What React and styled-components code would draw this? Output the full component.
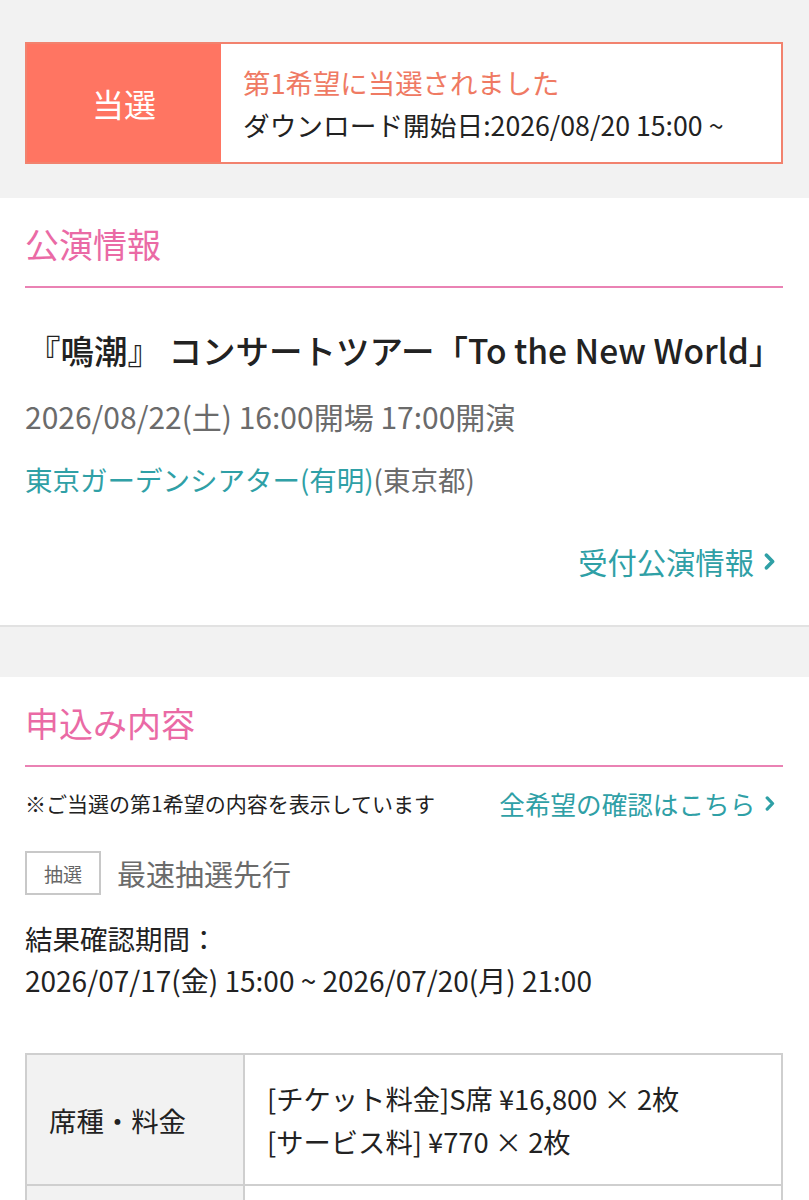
import React from 'react';
import styled, { createGlobalStyle } from 'styled-components';

const Global = createGlobalStyle`
  body {
    margin: 0;
    background: #f2f2f2;
    font-family: "Noto Sans CJK JP", "Noto Sans", sans-serif;
    color: #222;
  }
`;

const Page = styled.div`
  width: 809px;
  padding-top: 42px;
`;

const Result = styled.div`
  margin: 0 26px 34px 25px;
  display: flex;
  height: 122px;
  border: 2px solid #f2826e;
  background: #fff;
  box-sizing: border-box;
`;

const ResultBadge = styled.div`
  width: 194px;
  background: #ff7562;
  color: #fff;
  font-size: 32px;
  display: flex;
  align-items: center;
  justify-content: center;
`;

const ResultBody = styled.div`
  padding: 18px 0 0 22px;
  display: flex;
  flex-direction: column;
  gap: 3px;
  font-size: 26.7px;
  line-height: 40px;
  white-space: nowrap;
`;

const Coral = styled.div`
  color: #ef7a63;
  font-size: 27.4px;
`;

const Card = styled.section`
  background: #fff;
  padding: 24px 26px 0 25px;
  border-bottom: 2px solid #e2e2e2;
  margin-bottom: 50px;
`;

const Heading = styled.h2`
  margin: 0;
  color: #ea6aa5;
  font-size: 34px;
  font-weight: 400;
  line-height: 44px;
  padding-bottom: 20px;
  border-bottom: 2px solid #ea82b4;
`;

const Title = styled.h1`
  margin: 40px 0 0 2px;
  font-size: 33.5px;
  font-weight: 500;
  line-height: 44px;
  color: #222;
  white-space: nowrap;
`;

const Sub = styled.p`
  margin: 24px 0 0;
  font-size: 30px;
  line-height: 40px;
  color: #6b6b6b;
`;

const Venue = styled.p`
  margin: 23px 0 0;
  font-size: 27.5px;
  line-height: 40px;
  color: #6b6b6b;
`;

const Teal = styled.span`
  color: #2fa0a6;
`;

const LinkRow = styled.div`
  display: flex;
  justify-content: ${p => (p.$between ? 'space-between' : 'flex-end')};
  align-items: center;
  height: ${p => p.$h || 42}px;
  padding: ${p => p.$pad || '0'};
`;

const Link = styled.a`
  display: flex;
  align-items: center;
  gap: 10px;
  color: #2fa0a6;
  font-size: ${p => p.$size || 29.3}px;
  text-decoration: none;
`;

const Note = styled.span`
  font-size: 21px;
  color: #222;
`;

const TypeRow = styled.div`
  display: flex;
  align-items: center;
  gap: 16px;
  margin-top: 30px;
`;

const Tag = styled.span`
  border: 2px solid #c8c8c8;
  width: 76px;
  height: 44px;
  box-sizing: border-box;
  display: flex;
  align-items: center;
  justify-content: center;
  font-size: 19px;
  color: #666;
`;

const TypeName = styled.span`
  font-size: 29px;
  color: #6b6b6b;
`;

const Period = styled.div`
  margin-top: 22px;
  font-size: 27.5px;
  line-height: 42px;
  color: #222;
  white-space: nowrap;
`;

const PeriodDates = styled.div`
  font-size: 28px;
`;

const Table = styled.div`
  margin-top: 52px;
  border: 2px solid #cfcfcf;
  border-bottom: none;
`;

const Row = styled.div`
  display: grid;
  grid-template-columns: 218px 1fr;
  border-bottom: 2px solid #cfcfcf;
  min-height: ${p => p.$h || 129}px;
`;

const Th = styled.div`
  background: #f2f2f2;
  border-right: 2px solid #cfcfcf;
  display: flex;
  align-items: center;
  padding-left: 22px;
  font-size: 27.4px;
  color: #222;
`;

const Td = styled.div`
  display: flex;
  flex-direction: column;
  justify-content: center;
  padding-left: 22px;
  font-size: 27.3px;
  line-height: 43px;
  color: #222;
  white-space: nowrap;
`;

const Chevron = ({ size = 14 }) => (
  <svg width={size * 0.65} height={size} viewBox="0 0 9 14">
    <path d="M2 1.8 L7 7 L2 12.2" fill="none" stroke="#2fa0a6" strokeWidth="3" strokeLinecap="round" strokeLinejoin="round" />
  </svg>
);

export default function App() {
  return (
    <Page>
      <Global />
      <Result>
        <ResultBadge>当選</ResultBadge>
        <ResultBody>
          <Coral>第1希望に当選されました</Coral>
          <div>ダウンロード開始日:2026/08/20 15:00 ~</div>
        </ResultBody>
      </Result>

      <Card>
        <Heading>公演情報</Heading>
        <Title>『鳴潮』 コンサートツアー「To the New World」</Title>
        <Sub>2026/08/22(土) 16:00開場 17:00開演</Sub>
        <Venue>
          <Teal>東京ガーデンシアター(有明)</Teal>(東京都)
        </Venue>
        <LinkRow $pad="41px 8px 43px 0">
          <Link href="#">
            受付公演情報
            <Chevron size={17} />
          </Link>
        </LinkRow>
      </Card>

      <Card>
        <Heading>申込み内容</Heading>
        <LinkRow $between $h={36} $pad="18px 8px 0 0">
          <Note>※ご当選の第1希望の内容を表示しています</Note>
          <Link href="#" $size={25.6}>
            全希望の確認はこちら
            <Chevron size={15} />
          </Link>
        </LinkRow>
        <TypeRow>
          <Tag>抽選</Tag>
          <TypeName>最速抽選先行</TypeName>
        </TypeRow>
        <Period>
          結果確認期間：
          <PeriodDates>2026/07/17(金) 15:00 ~ 2026/07/20(月) 21:00</PeriodDates>
        </Period>
        <Table>
          <Row>
            <Th>席種・料金</Th>
            <Td>
              <div>[チケット料金]S席 ¥16,800 × 2枚</div>
              <div>[サービス料] ¥770 × 2枚</div>
            </Td>
          </Row>
          <Row $h={90}>
            <Th>&nbsp;</Th>
            <Td>&nbsp;</Td>
          </Row>
        </Table>
      </Card>
    </Page>
  );
}
